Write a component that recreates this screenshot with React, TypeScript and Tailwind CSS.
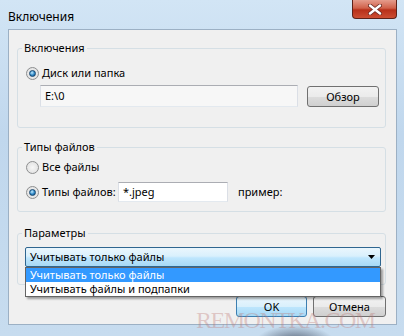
const Radio = ({ checked }: { checked?: boolean }) => (
  <span className="flex h-[13px] w-[13px] shrink-0 items-center justify-center rounded-full border border-[#8d8e8f] bg-[radial-gradient(circle_at_50%_50%,#f7f7f7,#dcdcdc)]">
    {checked && (
      <span className="h-[7px] w-[7px] rounded-full border border-[#17466f] bg-[radial-gradient(circle_at_40%_35%,#c4ecff,#2c87c7_55%,#0f4878)]" />
    )}
  </span>
);

const Button = ({ label, focused, className }: { label: string; focused?: boolean; className: string }) => (
  <button
    className={
      focused
        ? `flex items-center justify-center rounded-[3px] border border-[#3c7fb1] bg-[linear-gradient(180deg,#eaf6fd,#d9f0fc_50%,#bee6fd_50%,#a7d9f5)] ${className}`
        : `flex items-center justify-center rounded-[3px] border border-[#707070] bg-[linear-gradient(180deg,#f2f2f2,#ebebeb_50%,#dddddd_50%,#cfcfcf)] ${className}`
    }
  >
    {label}
  </button>
);

export default function App() {
  return (
    <div className="relative flex h-[336px] w-[404px] flex-col overflow-hidden whitespace-nowrap bg-[linear-gradient(180deg,#d2e5f5,#c0d7ed_40%,#c7dcef)] font-['Noto_Sans',sans-serif] text-[11px] leading-[16px] text-black">
      {/* Title bar */}
      <div className="flex h-[29px] shrink-0 items-start justify-between pl-[8px] pr-[7px]">
        <span className="mt-[9px] text-[12px]">Включения</span>
        <div className="flex h-[19px] w-[45px] items-center justify-center rounded-b-[4px] border border-t-0 border-[#5e2219] bg-[linear-gradient(180deg,#e59c8c,#d0614a_45%,#b8301a_55%,#cc4e33)]">
          <svg width="14" height="11" viewBox="0 0 14 11">
            <path d="M2 1.5 L12 9.5 M12 1.5 L2 9.5" stroke="#6b2a22" strokeWidth="4" strokeLinecap="round" />
            <path d="M2 1.5 L12 9.5 M12 1.5 L2 9.5" stroke="#ffffff" strokeWidth="2.4" strokeLinecap="round" />
          </svg>
        </div>
      </div>

      {/* Client area */}
      <div className="ml-[8px] mr-[7px] flex h-[296px] shrink-0 flex-col border border-[#9cb0c4] bg-[#f0f0f0] pt-[10px]">
        {/* Включения */}
        <fieldset className="ml-[8px] w-[369px] rounded-[3px] border border-[#d5dfe5] pb-[20px]">
          <legend className="ml-[4px] px-[2px]">Включения</legend>
          <label className="ml-[8px] mt-[9px] flex h-[16px] items-center gap-[3px]">
            <Radio checked />
            <span>Диск или папка</span>
          </label>
          <div className="ml-[22px] mt-[4px] flex items-start gap-[9px]">
            <div className="flex h-[22px] w-[258px] items-center border border-[#abadb3] border-x-[#dbdfe6] border-b-[#e3e9ef] bg-[#f7f7f7] pl-[4px]">
              E:\0
            </div>
            <Button label="Обзор" className="mt-[1px] h-[21px] w-[72px]" />
          </div>
        </fieldset>

        {/* Типы файлов */}
        <fieldset className="ml-[8px] mt-[11px] w-[369px] rounded-[3px] border border-[#d5dfe5] pb-[9px]">
          <legend className="ml-[4px] px-[2px]">Типы файлов</legend>
          <label className="ml-[8px] mt-[4px] flex h-[16px] items-center gap-[3px]">
            <Radio />
            <span>Все файлы</span>
          </label>
          <div className="ml-[8px] mt-[7px] flex h-[20px] items-center">
            <Radio checked />
            <span className="ml-[3px] w-[76px]">Типы файлов:</span>
            <div className="flex h-[20px] w-[110px] items-center border border-[#abadb3] border-x-[#dbdfe6] border-b-[#e3e9ef] bg-white pl-[4px]">
              *.jpeg
            </div>
            <span className="ml-[10px]">пример:</span>
          </div>
        </fieldset>

        {/* Параметры */}
        <fieldset className="ml-[8px] mt-[13px] w-[369px] rounded-[3px] border border-[#d5dfe5] pb-[17px]">
          <legend className="ml-[4px] px-[2px]">Параметры</legend>
          <div className="relative ml-[7px] mt-[6px] w-[356px]">
            <div className="flex h-[20px] items-center justify-between rounded-[2px] border border-[#2f6690] bg-[linear-gradient(180deg,#eaf6fd,#d9f0fc_45%,#bee6fd_55%,#a7d9f5)] pl-[4px] pr-[5px]">
              <span>Учитывать только файлы</span>
              <svg width="7" height="4" viewBox="0 0 7 4">
                <path d="M0 0 H7 L3.5 4 Z" fill="#000000" />
              </svg>
            </div>
            <div className="absolute left-0 top-full z-10 w-[356px] border border-[#646464] bg-white shadow-[2px_2px_2px_rgba(0,0,0,0.35)]">
              <div className="h-[14px] bg-[#3399ff] pl-[4px] leading-[14px] text-white">Учитывать только файлы</div>
              <div className="h-[14px] pl-[4px] leading-[14px]">Учитывать файлы и подпапки</div>
            </div>
          </div>
        </fieldset>

        <div className="mr-[10px] mt-[11px] flex justify-end gap-[6px]">
          <Button label="OK" focused className="h-[21px] w-[71px]" />
          <Button label="Отмена" className="h-[21px] w-[73px]" />
        </div>
      </div>

      {/* Bottom frame */}
      <div className="relative flex-1">
        <span className="absolute left-[255px] top-0 h-[22px] w-[80px] rounded-full bg-[radial-gradient(ellipse_at_50%_80%,rgba(45,55,75,0.75),rgba(45,55,75,0)_70%)]" />
      </div>

      {/* Watermark */}
      <span className="pointer-events-none absolute left-[196px] top-[306px] font-['Liberation_Serif',serif] text-[24px] leading-[28px] tracking-[-1.5px] text-[rgba(190,120,115,0.35)]">
        REMONTKA.COM
      </span>
    </div>
  );
}
